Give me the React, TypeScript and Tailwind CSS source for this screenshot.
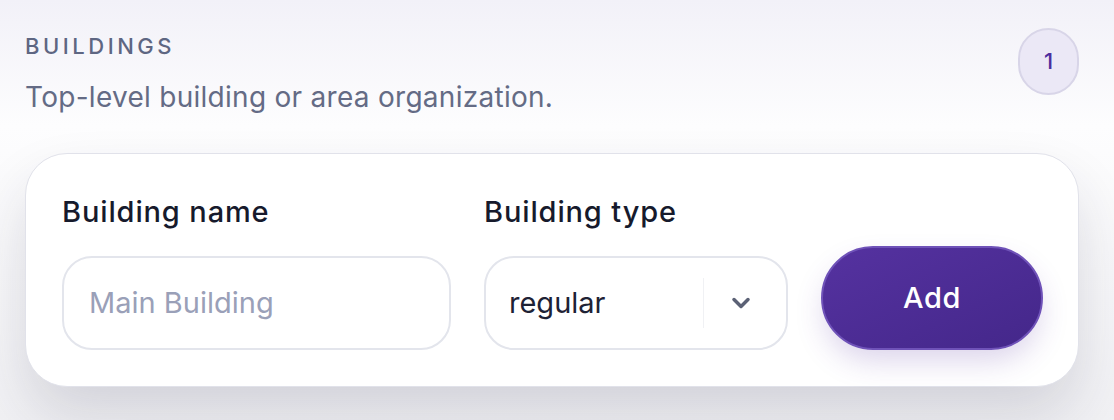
import { ChevronDown } from "lucide-react";

export default function App() {
  return (
    <div
      className="w-[1114px] h-[420px] overflow-hidden bg-gradient-to-b from-[#f2f1f8] via-[#fdfdfe] via-30% to-[#f1f1f4] pl-[25px] pr-[35px] pt-[32px]"
      style={{ fontFamily: "Inter, 'Noto Sans', sans-serif" }}
    >
      <div className="flex items-start justify-between">
        <div>
          <div className="text-[22px] leading-[28px] font-medium tracking-[0.16em] text-[#5e6682]">BUILDINGS</div>
          <div className="mt-[19px] text-[28px] leading-[36px] tracking-[0.01em] text-[#646b85]">Top-level building or area organization.</div>
        </div>
        <div className="mt-[-4px] flex h-[67px] w-[61px] items-center justify-center rounded-full border-2 border-[#d8d5e8] bg-[#ebe8f6] text-[22px] font-medium text-[#4c2d9e]">
          1
        </div>
      </div>

      <div className="mt-[38px] rounded-[42px] border border-[#e1e2ea] bg-white pl-[36px] pr-[35px] pt-[40px] pb-[36px] shadow-[0_30px_60px_-4px_rgba(40,40,70,0.16)]">
        <div className="flex items-end gap-[33px]">
          <div className="flex w-[389px] flex-col gap-[26px]">
            <label className="text-[29px] leading-[36px] font-medium tracking-[0.03em] text-[#161a2c]">Building name</label>
            <div className="flex h-[94px] items-center rounded-[30px] border-2 border-[#e3e5ec] px-[25px] text-[29px] text-[#9aa0b8]">
              Main Building
            </div>
          </div>
          <div className="flex w-[304px] flex-col gap-[26px]">
            <label className="text-[29px] leading-[36px] font-medium tracking-[0.03em] text-[#161a2c]">Building type</label>
            <div className="flex h-[94px] items-center rounded-[30px] border-2 border-[#e3e5ec]">
              <span className="flex-1 pl-[23px] text-[29px] text-[#1e2235]">regular</span>
              <div className="flex h-[50px] w-[83px] items-center justify-center border-l border-[#f0f1f4]">
                <ChevronDown className="mr-[8px] h-[28px] w-[28px] text-[#5b6175]" strokeWidth={3} />
              </div>
            </div>
          </div>
          <button className="h-[104px] w-[222px] rounded-full border-2 border-[#6f52b8] bg-gradient-to-br from-[#5532a0] to-[#44278a] text-[29px] font-medium tracking-[0.02em] text-white shadow-[0_14px_30px_-4px_rgba(85,50,160,0.22)]">
            Add
          </button>
        </div>
      </div>
    </div>
  );
}
